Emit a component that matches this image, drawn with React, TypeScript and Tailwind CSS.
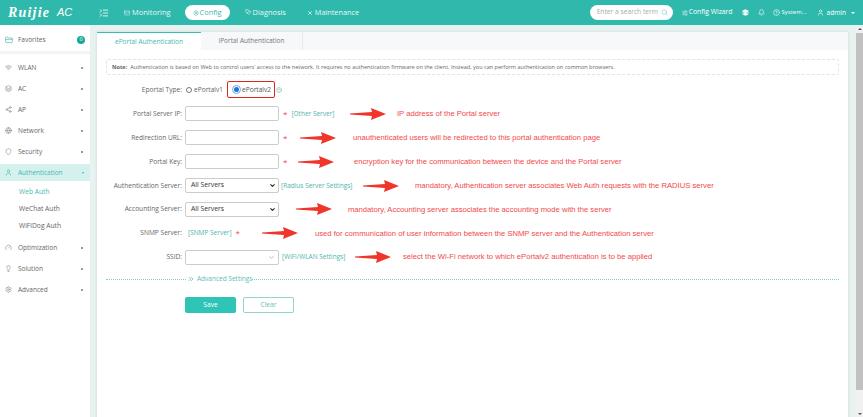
import { Bell, ChevronDown, ChevronsRight, CircleHelp, FolderClosed, Gauge, Globe, HelpCircle, Layers, Lightbulb, ListCollapse, Mail, Search, Settings, Share2, Shield, SlidersHorizontal, Stethoscope, User, Wifi, X } from 'lucide-react';
import type { ReactNode } from 'react';

const menu = [
  { name: 'WLAN', icon: <Wifi size={7} /> },
  { name: 'AC', icon: <Layers size={7} /> },
  { name: 'AP', icon: <Share2 size={7} /> },
  { name: 'Network', icon: <Globe size={7} /> },
  { name: 'Security', icon: <Shield size={7} /> },
];

const menuBottom = [
  { name: 'Optimization', icon: <Gauge size={7} /> },
  { name: 'Solution', icon: <Lightbulb size={7} /> },
  { name: 'Advanced', icon: <Settings size={7} /> },
];

const Arrow = () => (
  <svg viewBox="0 0 36 12" className="h-[12px] w-[36px] shrink-0">
    <path d="M0 5.6 L22 4 L21 0 L36 6 L21 12 L22 8 L0 6.4 Z" fill="#f0352b" />
  </svg>
);

const Note = ({ className, children }: { className: string; children: ReactNode }) => (
  <span className={`whitespace-nowrap font-['Liberation_Sans',sans-serif] text-[7.65px] text-[#f2484a] ${className}`}>{children}</span>
);

const Row = ({ label, children }: { label: string; children: ReactNode }) => (
  <div className="flex h-[23.9px] items-center">
    <div className="w-[76px] shrink-0 text-right whitespace-nowrap text-[6.6px] text-[#666]">{label}</div>
    <div className="flex items-center pl-[3px]">{children}</div>
  </div>
);

const Box = () => <div className="h-[15px] w-[94px] shrink-0 rounded-[2px] border border-[#ccc] bg-white" />;

const Pick = () => (
  <div className="flex h-[15px] w-[94px] shrink-0 items-center justify-between rounded-[2px] border border-[#ccc] bg-white pr-[2px] pl-[5px] text-[6.8px] text-[#333]">
    All Servers
    <ChevronDown size={7} strokeWidth={3.5} className="text-[#222]" />
  </div>
);

const Link = ({ className = '', children }: { className?: string; children: ReactNode }) => (
  <span className={`whitespace-nowrap text-[6.5px] text-[#4fb5ab] ${className}`}>{children}</span>
);

const Star2 = () => <span className="text-[8px] leading-[8px] text-[#f2484a]">*</span>;

const SideItem = ({ name, icon }: { name: string; icon: ReactNode }) => (
  <div className="flex h-[21px] items-center pr-[7px] pl-[5px] text-[#666]">
    <span className="w-[13px] text-[#888]">{icon}</span>
    <span className="flex-1 text-[6.5px]">{name}</span>
    <span className="size-[2px] rounded-full bg-[#777]" />
  </div>
);

export default function App() {
  return (
    <div className="flex h-screen w-full flex-col overflow-hidden bg-[#e8f2f0] font-['Open_Sans',sans-serif]">
      {/* Top bar */}
      <header className="flex h-[25px] shrink-0 items-center bg-[#2fb8ac] text-white">
        <span className="ml-[8px] w-[49px] font-['Liberation_Serif',serif] text-[14px] font-bold tracking-[1.2px] italic">Ruijie</span>
        <span className="w-[42px] font-['Liberation_Sans',sans-serif] text-[11px] font-light italic">AC</span>
        <ListCollapse size={10} className="mr-[15px]" />
        <div className="flex items-center gap-[2px] text-[7.5px] opacity-90">
          <Mail size={6} />
          <span>Monitoring</span>
        </div>
        <div className="ml-[14px] flex h-[15px] w-[45px] items-center justify-center gap-[1px] rounded-full bg-white text-[7.4px] text-[#45b9ae]">
          <Settings size={6} />
          <span>Config</span>
        </div>
        <div className="ml-[15px] flex items-center gap-[2px] text-[7.4px] opacity-90">
          <Stethoscope size={6} />
          <span>Diagnosis</span>
        </div>
        <div className="ml-[21px] flex items-center gap-[2px] text-[7.3px] opacity-90">
          <X size={6} strokeWidth={3} />
          <span>Maintenance</span>
        </div>
        <div className="ml-auto flex h-[15px] w-[83px] items-center justify-between rounded-full bg-white pr-[5px] pl-[7px] text-[6.7px] whitespace-nowrap text-[#aaa]">
          Enter a search term
          <Search size={7} className="shrink-0 text-[#7cc]" />
        </div>
        <div className="ml-[9px] flex items-center gap-[1px] text-[6.8px]">
          <SlidersHorizontal size={6} />
          <span>Config Wizard</span>
        </div>
        <Layers size={7} fill="white" className="ml-[9px]" />
        <Bell size={7} className="ml-[9px]" />
        <div className="ml-[8px] flex items-center gap-[2px] text-[6px]">
          <HelpCircle size={7} />
          <span>System...</span>
        </div>
        <div className="ml-[11px] flex items-center gap-[2px] text-[6.6px]">
          <User size={7} />
          <span>admin</span>
        </div>
        <span className="mr-[8px] ml-[5px] border-x-[2px] border-t-[2px] border-x-transparent border-t-white" />
      </header>

      <div className="flex min-h-0 flex-1">
        {/* Sidebar */}
        <aside className="w-[90px] shrink-0 bg-white">
          <div className="flex h-[29px] items-center border-b-[3px] border-[#f0f5f4] pt-[3px] pr-[5px] pl-[5px] text-[#666]">
            <span className="w-[13px] text-[#4fb5ab]"><FolderClosed size={8} /></span>
            <span className="flex-1 text-[6.5px]">Favorites</span>
            <span className="flex size-[8px] items-center justify-center rounded-full bg-[#17a99b] text-[5.5px] text-white">0</span>
          </div>
          <div className="h-[3px]" />
          {menu.map((m) => <SideItem key={m.name} name={m.name} icon={m.icon} />)}
          <div className="mt-[2px] flex h-[17px] items-center bg-[#d5f1ee] pr-[6px] pl-[5px] text-[#45b9ae]">
            <span className="w-[13px]"><User size={7} /></span>
            <span className="flex-1 text-[6.5px]">Authentication</span>
            <span className="border-x-[1.5px] border-t-[2px] border-x-transparent border-t-[#45b9ae]" />
          </div>
          <div className="pt-[3px] pl-[19px] text-[6.7px] text-[#666]">
            <div className="flex h-[17px] items-center text-[#45b9ae]">Web Auth</div>
            <div className="flex h-[17px] items-center">WeChat Auth</div>
            <div className="flex h-[17px] items-center">WiFiDog Auth</div>
          </div>
          <div className="h-[2px]" />
          {menuBottom.map((m) => <SideItem key={m.name} name={m.name} icon={m.icon} />)}
        </aside>

        {/* Main card */}
        <main className="mt-[7px] ml-[7px] flex h-full w-[751px] shrink-0 flex-col bg-white shadow-[0_0_3px_rgba(0,0,0,0.12)]">
          <div className="flex h-[18px] shrink-0 bg-[#f6f8f9] text-[6.5px]">
            <div className="flex w-[104px] items-center justify-center border-t border-[#3cbcb0] bg-white text-[#45b9ae]">ePortal Authentication</div>
            <div className="flex w-[102px] items-center justify-center border-r border-[#e8ecec] text-[#777]">iPortal Authentication</div>
          </div>

          <div className="px-[9px] pt-[9px]">
            <div className="flex h-[16px] items-center rounded-[2px] border border-dashed border-[#e4e4e4] pl-[5px] text-[5.55px] text-[#666]">
              <span className="mr-[3px] font-bold">Note:</span>
              Authentication is based on Web to control users' access to the network. It requires no authentication firmware on the client. Instead, you can perform authentication on common browsers.
            </div>

            <div className="mt-[3px]">
              <Row label="Eportal Type:">
                <span className="ml-[1px] size-[6px] shrink-0 rounded-full border border-[#777] bg-white" />
                <span className="ml-[2px] w-[33px] shrink-0 text-[6.6px] text-[#666]">ePortalv1</span>
                {/* red annotation frame */}
                <div className="flex h-[17px] w-[48px] shrink-0 items-center rounded-[2px] border-[1.5px] border-[#e2231f] pl-[6px]">
                  <span className="size-[5px] shrink-0 rounded-full bg-[#1a73e8] outline outline-1 outline-offset-1 outline-[#7aa7e0]" />
                  <span className="ml-[3px] text-[6.6px] text-[#555]">ePortalv2</span>
                </div>
                <CircleHelp size={6} className="ml-[1px] text-[#4fb5ab]" />
              </Row>
              <Row label="Portal Server IP:">
                <Box />
                <div className="flex w-[71px] shrink-0 items-center pl-[4px]">
                  <Star2 />
                  <Link className="ml-[4px]">[Other Server]</Link>
                </div>
                <Arrow />
                <Note className="ml-[11px]">IP address of the Portal server</Note>
              </Row>
              <Row label="Redirection URL:">
                <Box />
                <div className="flex w-[21px] shrink-0 items-center pl-[4px]"><Star2 /></div>
                <Arrow />
                <Note className="ml-[17px]">unauthenticated users will be redirected to this portal authentication page</Note>
              </Row>
              <Row label="Portal Key:">
                <Box />
                <div className="flex w-[19px] shrink-0 items-center pl-[4px]"><Star2 /></div>
                <Arrow />
                <Note className="ml-[20px]">encryption key for the communication between the device and the Portal server</Note>
              </Row>
              <Row label="Authentication Server:">
                <Pick />
                <div className="flex w-[84px] shrink-0 items-center pl-[2px]"><Link>[Radius Server Settings]</Link></div>
                <Arrow />
                <Note className="ml-[16px]">mandatory, Authentication server associates Web Auth requests with the RADIUS server</Note>
              </Row>
              <Row label="Accounting Server:">
                <Pick />
                <div className="w-[17px] shrink-0" />
                <Arrow />
                <Note className="ml-[16px]">mandatory, Accounting server associates the accounting mode with the server</Note>
              </Row>
              <Row label="SNMP Server:">
                <div className="flex w-[77px] shrink-0 items-center pl-[3px]">
                  <Link>[SNMP Server]</Link>
                  <span className="ml-[4px] flex items-center"><Star2 /></span>
                </div>
                <Arrow />
                <Note className="ml-[17px]">used for communication of user information between the SNMP server and the Authentication server</Note>
              </Row>
              <Row label="SSID:">
                <div className="flex h-[15px] w-[94px] shrink-0 items-center justify-end rounded-[2px] border border-[#ccc] bg-white pr-[3px]">
                  <ChevronDown size={7} className="text-[#888]" />
                </div>
                <div className="flex w-[76px] shrink-0 items-center pl-[3px]"><Link>[WiFi/WLAN Settings]</Link></div>
                <Arrow />
                <Note className="ml-[12px]">select the Wi-Fi network to which ePortalv2 authentication is to be applied</Note>
              </Row>
            </div>

            <div className="mt-[3px] flex h-[14px] items-center">
              <div className="h-0 w-[80px] border-t border-dotted border-[#7fcfc7]" />
              <ChevronsRight size={8} className="ml-[1px] text-[#45b9ae]" />
              <span className="ml-[2px] text-[6.5px] text-[#62bdb3]">Advanced Settings</span>
              <div className="h-0 flex-1 border-t border-dotted border-[#7fcfc7]" />
            </div>

            <div className="mt-[11px] ml-[79px] flex gap-[7px]">
              <button className="h-[16px] w-[51px] rounded-[2px] bg-[#2ec4b6] text-[6.6px] text-white">Save</button>
              <button className="h-[16px] w-[51px] rounded-[2px] border border-[#8ed4cd] bg-white text-[6.6px] text-[#62bdb3]">Clear</button>
            </div>
          </div>
        </main>

        {/* Scrollbar */}
        <div className="ml-[8px] flex w-[7px] shrink-0 flex-col items-center bg-[#f1f1f1]">
          <span className="mt-[3px] border-x-[2px] border-b-[2px] border-x-transparent border-b-[#555]" />
          <div className="mt-[3px] h-[357px] w-full bg-[#c1c1c1]" />
          <span className="mt-auto mb-[2px] border-x-[2px] border-t-[2px] border-x-transparent border-t-[#555]" />
        </div>
      </div>
    </div>
  );
}
